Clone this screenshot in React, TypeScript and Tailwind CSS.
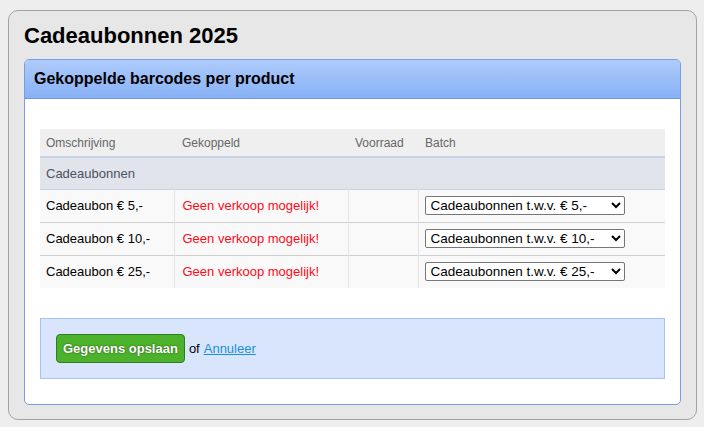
import React from "react";

const ROWS = [
  { name: "Cadeaubon € 5,-", batch: "Cadeaubonnen t.w.v. € 5,-" },
  { name: "Cadeaubon € 10,-", batch: "Cadeaubonnen t.w.v. € 10,-" },
  { name: "Cadeaubon € 25,-", batch: "Cadeaubonnen t.w.v. € 25,-" },
];

export default function App() {
  return (
    <div className="min-h-[427px] bg-[#eeeeee] pt-[10px] pb-[8px] pl-2 pr-[7px] font-['Liberation_Sans',Arial,sans-serif]">
      <div className="rounded-[10px] border border-[#a3a3a3] bg-[#e7e7e7] px-[15px] pt-[12px] pb-[14px]">
        <h1 className="mb-[11px] text-[22px] font-bold leading-[25px] text-black">Cadeaubonnen 2025</h1>

        <div className="rounded-[5px] border border-[#7a9de0] bg-white">
          {/* header */}
          <div className="flex h-[39px] items-center rounded-t-[4px] border-b border-[#6f95dc] bg-gradient-to-b from-[#aecbfb] to-[#87b1f6] px-[9px]">
            <h2 className="text-[16px] font-bold text-black">Gekoppelde barcodes per product</h2>
          </div>

          <div className="px-[15px] pt-[30px] pb-[25px]">
            <table className="w-full border-collapse text-[13px]">
              <thead>
                <tr className="h-[28px] border-b-2 border-[#c8d3ea] bg-[#efefef] text-left text-[12px] text-[#666666]">
                  <th className="w-[134px] px-[6px] font-normal">Omschrijving</th>
                  <th className="w-[174px] px-[8px] font-normal">Gekoppeld</th>
                  <th className="w-[70px] px-[7px] font-normal">Voorraad</th>
                  <th className="px-[7px] font-normal">Batch</th>
                </tr>
              </thead>
              <tbody>
                <tr className="h-[32px] border-b border-[#c8d3ea] bg-[#e1e4ea]">
                  <td colSpan={4} className="px-[6px] text-[#4b5263]">Cadeaubonnen</td>
                </tr>
                {ROWS.map((r, i) => (
                  <tr key={r.name} className={`h-[33px] bg-[#f9f9f9] ${i < ROWS.length - 1 ? "border-b border-[#cfcfcf]" : ""}`}>
                    <td className="border-r border-[#e4e4e4] px-[6px] text-black">{r.name}</td>
                    <td className="border-r border-[#e4e4e4] px-[8px] text-[#ff0a17]">Geen verkoop mogelijk!</td>
                    <td className="border-r border-[#e4e4e4]"></td>
                    <td className="px-[6px]">
                      <select
                        defaultValue={r.batch}
                        className="h-[19px] w-[200px] rounded-[2px] border border-[#767676] bg-white pl-[1px] text-[13.5px] leading-[17px] text-black"
                      >
                        <option>{r.batch}</option>
                      </select>
                    </td>
                  </tr>
                ))}
              </tbody>
            </table>

            <div className="mt-[30px] flex h-[61px] items-center border border-[#a6c3f6] bg-[#d9e5fc] px-[15px] text-[13px]">
              <button className="h-[29px] rounded-[4px] border border-[#2f7d1c] bg-[#4cb22b] px-[6px] text-[13px] font-bold text-white [text-shadow:0_0_2px_#1f4d12]">
                Gegevens opslaan
              </button>
              <span className="ml-[4px] text-black">of</span>
              <a href="#" className="ml-[4px] text-[#1a90da] underline">Annuleer</a>
            </div>
          </div>
        </div>
      </div>
    </div>
  );
}
